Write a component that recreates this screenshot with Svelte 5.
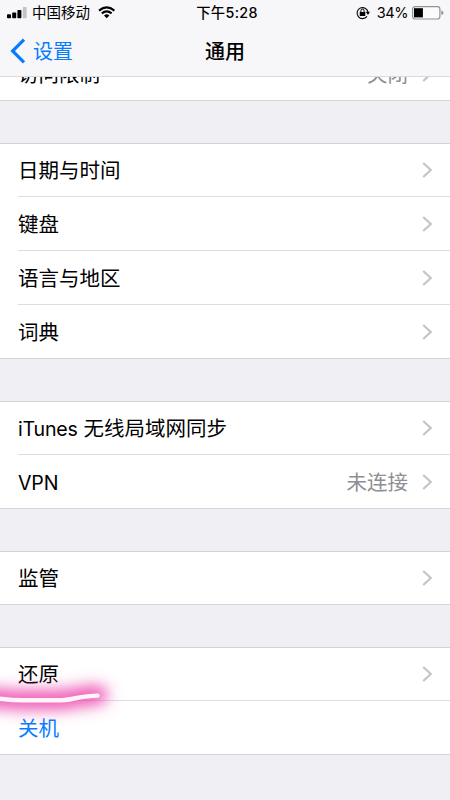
<script>
  const groups = [
    [{ label: '访问限制', value: '关闭', arrow: true }],
    [
      { label: '日期与时间', arrow: true },
      { label: '键盘', arrow: true },
      { label: '语言与地区', arrow: true },
      { label: '词典', arrow: true }
    ],
    [
      { latin: 'iTunes', label: ' 无线局域网同步', arrow: true },
      { latin: 'VPN', label: '', value: '未连接', arrow: true }
    ],
    [{ label: '监管', arrow: true }],
    [
      { label: '还原', arrow: true, marked: true },
      { label: '关机', action: true }
    ]
  ];
</script>

<div class="screen">
  <header>
    <div class="status">
      <div class="left">
        <svg width="20" height="12" viewBox="0 0 20 12">
          <rect x="0" y="7.3" width="4" height="3.9" rx=".8" />
          <rect x="5.2" y="5.5" width="4" height="5.7" rx=".8" />
          <rect x="10.4" y="3" width="4" height="8.2" rx=".8" />
          <rect x="15.8" y="0" width="3.8" height="11.2" rx=".8" fill="#c3c3c6" />
        </svg>
        <span class="carrier">中国移动</span>
        <svg class="wifi" width="18" height="13" viewBox="0 0 18 13">
          <path d="M1 4.6Q8.7-1.8 16.4 4.6M3.8 7.4Q8.7 3.2 13.6 7.4" fill="none" stroke="#000" stroke-width="2.1" />
          <path d="M6 9.4Q8.7 7.2 11.4 9.4L8.7 12.2Z" />
        </svg>
      </div>
      <div class="time">下午5:28</div>
      <div class="right">
        <svg width="14" height="14" viewBox="0 0 14 14">
          <path d="M11 10.4A5.5 5.5 0 1 1 12 6.2" fill="none" stroke="#000" stroke-width="1.1" />
          <path d="M9.7 5.8h4.2L12 8.9Z" />
          <rect x="3.7" y="6" width="5.6" height="4" rx=".4" />
          <path d="M4.9 6.3V4.8a1.6 1.6 0 0 1 3.2 0v1.5" fill="none" stroke="#000" stroke-width="1" />
        </svg>
        <span class="percent">34%</span>
        <svg class="battery" width="32" height="14" viewBox="0 0 32 14">
          <rect x=".6" y=".6" width="27.3" height="12.4" rx="2.5" fill="#fbfbfc" stroke="#929295" stroke-width="1.2" />
          <rect x="2" y="2.2" width="8.9" height="9.2" />
          <path d="M29.3 4.5q2.2.7 2.2 2.3t-2.2 2.3Z" fill="#929295" />
        </svg>
      </div>
    </div>
    <nav>
      <div class="back">
        <svg width="16" height="26" viewBox="0 0 16 26">
          <path d="M14 1.6 2.6 13 14 24.4" fill="none" stroke="#087cff" stroke-width="3.2" />
        </svg>
        <span>设置</span>
      </div>
      <h1>通用</h1>
      <div></div>
    </nav>
  </header>
  <main>
    {#each groups as group}
      <section>
        {#each group as row}
          <div class="row" class:action={row.action} class:full={row.marked}>
            <div class="cell">
              <span class="label">{#if row.latin}<span class="latin">{row.latin}</span>{/if}{row.label}</span>
              {#if row.value}<span class="value">{row.value}</span>{/if}
              {#if row.arrow}
                <svg class="chevron" width="11" height="16" viewBox="0 0 11 16">
                  <path d="M1.2 1 8.8 8 1.2 15" fill="none" stroke="#c4c4c9" stroke-width="2.2" />
                </svg>
              {/if}
            </div>
            {#if row.marked}
              <svg class="marker" width="150" height="80" viewBox="0 0 150 80">
                <defs>
                  <filter id="glow" x="-80" y="-30" width="260" height="140" filterUnits="userSpaceOnUse">
                    <feGaussianBlur stdDeviation="7.5" />
                  </filter>
                </defs>
                <path d="M-12 36Q4 39 24 39H60C74 38 84 34 98 34" fill="none" stroke="#ec3eaa" stroke-opacity=".9" stroke-width="19" stroke-linecap="round" filter="url(#glow)" />
                <path d="M-6 36.8Q10 39.3 24 39.3H62C74 38.3 82 34.8 97.5 34.6" fill="none" stroke="#fff4fc" stroke-width="4.4" stroke-linecap="round" />
              </svg>
            {/if}
          </div>
        {/each}
      </section>
    {/each}
  </main>
</div>

<style>
  :global(body) { margin: 0; }
  .screen {
    width: 450px;
    height: 800px;
    display: flex;
    flex-direction: column;
    overflow: hidden;
    background: #efeff4;
    color: #000;
    font-family: Inter, "Noto Sans CJK SC", sans-serif;
  }
  svg { display: block; flex: none; }
  header {
    box-sizing: border-box;
    height: 77px;
    flex: none;
    background: #f7f7f9;
    border-bottom: 1px solid #dadadd;
  }
  .status {
    height: 25px;
    display: grid;
    grid-template-columns: 1fr auto 1fr;
    align-items: center;
    font-size: 14.5px;
    line-height: 25px;
  }
  .left { display: flex; align-items: center; padding-left: 7px; }
  .carrier { margin-left: 5px; }
  .wifi { margin-left: 8px; }
  .time { font-size: 14.3px; font-weight: 500; letter-spacing: .35px; padding-left: 4px; }
  .right { display: flex; align-items: center; justify-content: flex-end; padding-right: 6px; }
  .percent { margin-left: 7px; font-size: 14.5px; letter-spacing: -.45px; }
  .battery { margin-left: 4px; }
  nav {
    height: 51px;
    display: grid;
    grid-template-columns: 1fr auto 1fr;
    align-items: center;
    font-size: 20px;
    line-height: 28px;
  }
  .back { display: flex; align-items: center; gap: 7px; padding-left: 10px; color: #087cff; }
  .back span, h1 { padding-top: 2px; }
  h1 { margin: 0; font-size: 20px; font-weight: 500; }
  main {
    flex: 1;
    min-height: 0;
    overflow: hidden;
    display: flex;
    flex-direction: column;
    gap: 42px;
  }
  section {
    flex: none;
    background: #fff;
    box-shadow: inset 0 1px #d3d3d7, inset 0 -1px #d3d3d7;
  }
  section:first-child { margin-top: -30px; }
  .row { position: relative; height: 54px; padding-left: 18px; }
  .cell {
    box-sizing: border-box;
    height: 54px;
    display: flex;
    align-items: center;
    padding-right: 17px;
    border-bottom: 1px solid #dedee1;
    font-size: 20.5px;
    line-height: 30px;
  }
  .row:last-child .cell { border-color: transparent; }
  .row.full, .row.action { padding-left: 0; }
  .full .cell, .action .cell { padding-left: 18px; }
  .row.action { color: #087cff; }
  .label { flex: 1; white-space: pre; padding-top: 2px; }
  .latin { font-size: 19.6px; letter-spacing: -.2px; }
  .value { color: #8e8e93; margin-right: 14px; padding-top: 2px; }
  .marker { position: absolute; left: 0; top: 14px; z-index: 1; }
</style>
